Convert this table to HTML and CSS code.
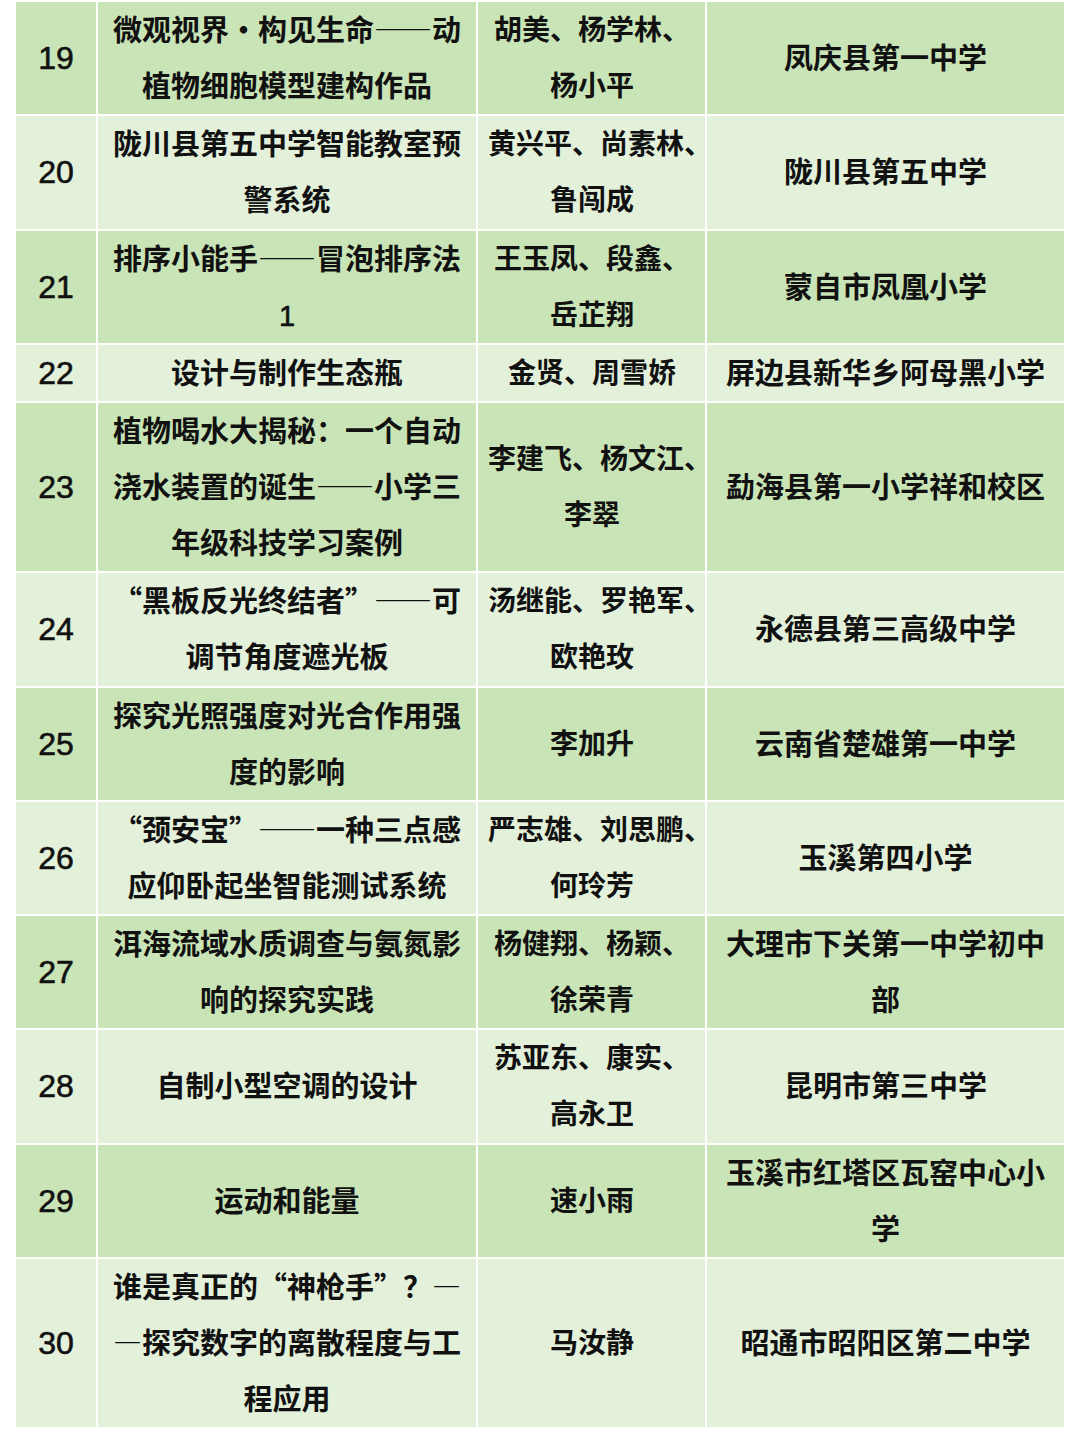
FILE: index.html
```html
<!DOCTYPE html>
<html lang="zh-CN">
<head>
<meta charset="utf-8">
<link rel="stylesheet" href="styles.css">
</head>
<body>
<div class="wrap">
<table class="awards">
<colgroup><col class="c-no"><col class="c-title"><col class="c-names"><col class="c-school"></colgroup>
<tbody>
<tr class="g"><td class="no">19</td><td class="t"><div class="cj">微观视界・构见生命——动<br>植物细胞模型建构作品</div></td><td class="n"><div class="cj">胡美、杨学林、<br>杨小平</div></td><td class="s"><div class="cj">凤庆县第一中学</div></td></tr>
<tr class="l"><td class="no">20</td><td class="t"><div class="cj">陇川县第五中学智能教室预<br>警系统</div></td><td class="n"><div class="cj">黄兴平、尚素林、<br>鲁闯成</div></td><td class="s"><div class="cj">陇川县第五中学</div></td></tr>
<tr class="g"><td class="no">21</td><td class="t"><div class="cj">排序小能手——冒泡排序法<br><span class="lat">1</span></div></td><td class="n"><div class="cj">王玉凤、段鑫、<br>岳芷翔</div></td><td class="s"><div class="cj">蒙自市凤凰小学</div></td></tr>
<tr class="l"><td class="no">22</td><td class="t"><div class="cj">设计与制作生态瓶</div></td><td class="n"><div class="cj">金贤、周雪娇</div></td><td class="s"><div class="cj">屏边县新华乡阿母黑小学</div></td></tr>
<tr class="g"><td class="no">23</td><td class="t"><div class="cj">植物喝水大揭秘：一个自动<br>浇水装置的诞生——小学三<br>年级科技学习案例</div></td><td class="n"><div class="cj">李建飞、杨文江、<br>李翠</div></td><td class="s"><div class="cj">勐海县第一小学祥和校区</div></td></tr>
<tr class="l"><td class="no">24</td><td class="t"><div class="cj">“黑板反光终结者”——可<br>调节角度遮光板</div></td><td class="n"><div class="cj">汤继能、罗艳军、<br>欧艳玫</div></td><td class="s"><div class="cj">永德县第三高级中学</div></td></tr>
<tr class="g"><td class="no">25</td><td class="t"><div class="cj">探究光照强度对光合作用强<br>度的影响</div></td><td class="n"><div class="cj">李加升</div></td><td class="s"><div class="cj">云南省楚雄第一中学</div></td></tr>
<tr class="l"><td class="no">26</td><td class="t"><div class="cj">“颈安宝”——一种三点感<br>应仰卧起坐智能测试系统</div></td><td class="n"><div class="cj">严志雄、刘思鹏、<br>何玲芳</div></td><td class="s"><div class="cj">玉溪第四小学</div></td></tr>
<tr class="g"><td class="no">27</td><td class="t"><div class="cj">洱海流域水质调查与氨氮影<br>响的探究实践</div></td><td class="n"><div class="cj">杨健翔、杨颖、<br>徐荣青</div></td><td class="s"><div class="cj">大理市下关第一中学初中<br>部</div></td></tr>
<tr class="l"><td class="no">28</td><td class="t"><div class="cj">自制小型空调的设计</div></td><td class="n"><div class="cj">苏亚东、康实、<br>高永卫</div></td><td class="s"><div class="cj">昆明市第三中学</div></td></tr>
<tr class="g"><td class="no">29</td><td class="t"><div class="cj">运动和能量</div></td><td class="n"><div class="cj">速小雨</div></td><td class="s"><div class="cj">玉溪市红塔区瓦窑中心小<br>学</div></td></tr>
<tr class="l"><td class="no">30</td><td class="t"><div class="cj">谁是真正的“神枪手”？—<br>—探究数字的离散程度与工<br>程应用</div></td><td class="n"><div class="cj">马汝静</div></td><td class="s"><div class="cj">昭通市昭阳区第二中学</div></td></tr>
</tbody>
</table>
</div>
</body>
</html>
```

FILE: styles.css
```css
html, body {
  margin: 0;
  padding: 0;
  background: #ffffff;
}

.wrap {
  padding: 0 0 0 14px;
}

.awards {
  border-collapse: separate;
  border-spacing: 2px;
  table-layout: fixed;
  width: 1052px;
  font-family: "Noto Sans CJK SC", "Liberation Sans", sans-serif;
  font-weight: 700;
  color: #111111;
}

.c-no { width: 80px; }
.c-title { width: 378px; }
.c-names { width: 227px; }
.c-school { width: 357px; }

.awards td {
  padding: 0;
  text-align: center;
  vertical-align: middle;
  line-height: 56.12px;
  white-space: nowrap;
  font-size: 29px;
  overflow: visible;
}

.awards tr.g td { background: #c9e4b6; }
.awards tr.l td { background: #e3f0da; }

.cj {
  margin: -2px 0 2px 0;
}

.awards td.n .cj {
  font-size: 28px;
  padding: 0 9px 0 10px;
}

.awards td.no {
  font-family: "Liberation Sans", Arial, sans-serif;
  font-size: 32px;
  font-weight: 400;
  -webkit-text-stroke: 0.6px #111;
}

.lat {
  font-family: "Liberation Sans", Arial, sans-serif;
  font-weight: 400;
  line-height: 1;
  -webkit-text-stroke: 0.6px #111;
}
```
